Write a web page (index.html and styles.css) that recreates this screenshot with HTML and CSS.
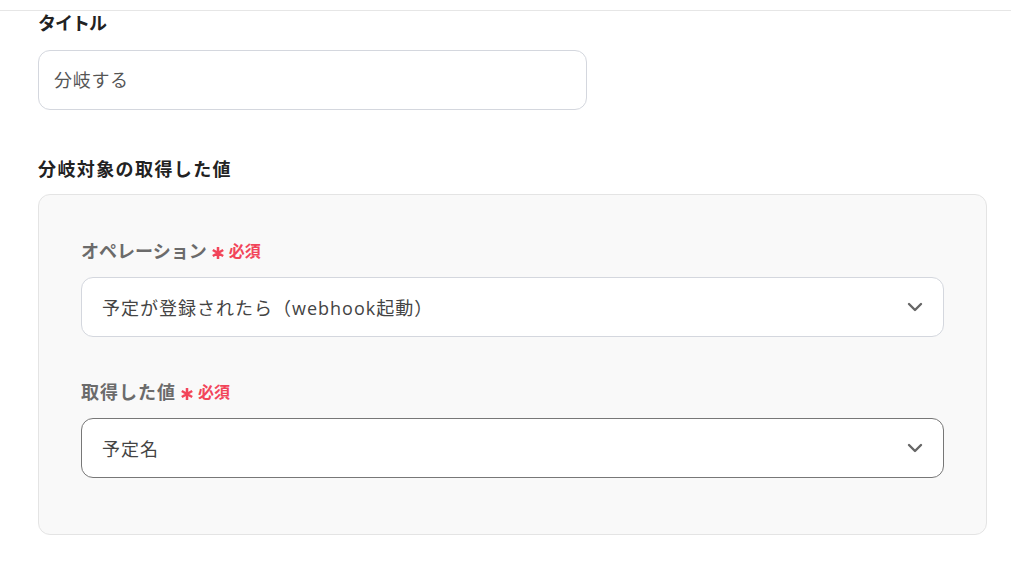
FILE: index.html
```html
<!DOCTYPE html>
<html lang="ja">
<head>
<meta charset="utf-8">
<link rel="stylesheet" href="styles.css">
</head>
<body>
<div class="topline"></div>
<main class="form">
  <div class="label title-label">タイトル</div>
  <div class="input">分岐する</div>

  <div class="label section-label">分岐対象の取得した値</div>
  <div class="panel">
    <div class="field-label">オペレーション<span class="req"><svg class="ast" width="14" height="14" viewBox="0 0 14 14"><path d="M7 1 V13 M1.8 4 L12.2 10 M1.8 10 L12.2 4" stroke="#f2455a" stroke-width="2.5" fill="none"/></svg>必須</span></div>
    <div class="select">
      <span class="val">予定が登録されたら（webhook起動）</span>
      <svg class="chev" width="16" height="10" viewBox="0 0 16 10"><path d="M2 2 L8 8 L14 2" fill="none" stroke="#666" stroke-width="2.4" stroke-linecap="round" stroke-linejoin="round"/></svg>
    </div>
    <div class="field-label second">取得した値<span class="req"><svg class="ast" width="14" height="14" viewBox="0 0 14 14"><path d="M7 1 V13 M1.8 4 L12.2 10 M1.8 10 L12.2 4" stroke="#f2455a" stroke-width="2.5" fill="none"/></svg>必須</span></div>
    <div class="select focused">
      <span class="val wide">予定名</span>
      <svg class="chev" width="16" height="10" viewBox="0 0 16 10"><path d="M2 2 L8 8 L14 2" fill="none" stroke="#666" stroke-width="2.4" stroke-linecap="round" stroke-linejoin="round"/></svg>
    </div>
  </div>
</main>
</body>
</html>
```
FILE: styles.css
```css
html, body {
  margin: 0;
  padding: 0;
  background: #ffffff;
  font-family: "Open Sans", "Noto Sans CJK JP", sans-serif;
}
.topline {
  height: 10px;
  border-bottom: 1px solid #e6e6e6;
}
.form {
  display: flex;
  flex-direction: column;
  padding: 0 24px 0 38px;
}
.label {
  font-size: 18px;
  font-weight: 700;
  line-height: 24px;
  color: #222;
}
.title-label {
  letter-spacing: -1px;
}
.input {
  margin-top: 15px;
  width: 549px;
  box-sizing: border-box;
  height: 60px;
  border: 1px solid #d4d7de;
  border-radius: 12px;
  display: flex;
  align-items: center;
  padding: 0 15px 3px 15px;
  font-size: 18px;
  letter-spacing: 0.7px;
  color: #555;
}
.section-label {
  margin-top: 47px;
  letter-spacing: 1.4px;
}
.panel {
  margin-top: 13px;
  background: #f9f9f9;
  border: 1px solid #e4e4e4;
  border-radius: 12px;
  padding: 44px 42px 56px 42px;
  display: flex;
  flex-direction: column;
}
.field-label {
  font-size: 18px;
  font-weight: 700;
  line-height: 24px;
  color: #6b6b6b;
  display: flex;
  align-items: center;
}
.field-label.second {
  margin-top: 43px;
  letter-spacing: 1px;
}
.req {
  color: #f2455a;
  font-size: 16px;
  font-weight: 700;
  letter-spacing: 0;
  margin-left: 4px;
  display: inline-flex;
  align-items: center;
}
.ast {
  margin-right: 4px;
  position: relative;
  top: 2px;
}
.select {
  margin-top: 14px;
  height: 60px;
  box-sizing: border-box;
  background: #fff;
  border: 1px solid #d4d7de;
  border-radius: 12px;
  display: flex;
  align-items: center;
  justify-content: space-between;
  padding: 0 20px 1px 20px;
  font-size: 18px;
  color: #444;
}
.val {
  letter-spacing: 1px;
}
.select.focused {
  border-color: #777;
}
.chev {
  flex: none;
}
```
